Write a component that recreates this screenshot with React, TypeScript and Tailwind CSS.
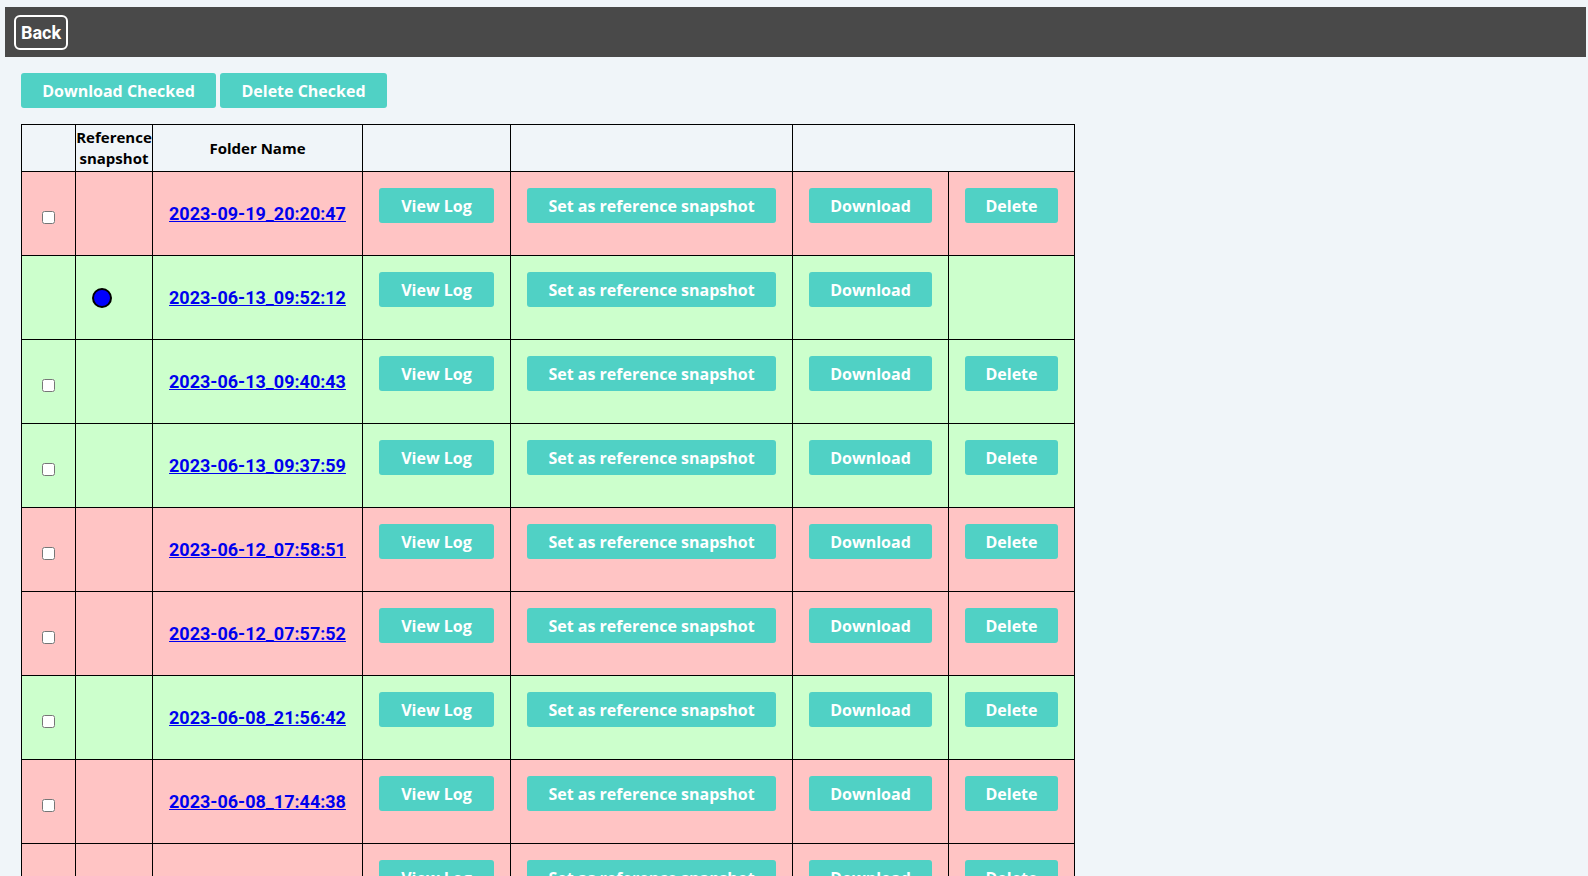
import { useState } from "react";

interface Snapshot {
  name: string;
  ok: boolean;
  isReference: boolean;
}

const snapshots: Snapshot[] = [
  { name: "2023-09-19_20:20:47", ok: false, isReference: false },
  { name: "2023-06-13_09:52:12", ok: true, isReference: true },
  { name: "2023-06-13_09:40:43", ok: true, isReference: false },
  { name: "2023-06-13_09:37:59", ok: true, isReference: false },
  { name: "2023-06-12_07:58:51", ok: false, isReference: false },
  { name: "2023-06-12_07:57:52", ok: false, isReference: false },
  { name: "2023-06-08_21:56:42", ok: true, isReference: false },
  { name: "2023-06-08_17:44:38", ok: false, isReference: false },
  { name: "2023-06-08_09:12:05", ok: false, isReference: false },
];

const btnFont = { fontFamily: "'Open Sans', 'DejaVu Sans', sans-serif" };

function TealButton(props: { label: string; className?: string }) {
  return (
    <button
      style={btnFont}
      className={
        "h-[35px] rounded-[3px] bg-[#50d1c5] text-[16px] font-bold text-white cursor-pointer " +
        (props.className || "")
      }
    >
      {props.label}
    </button>
  );
}

export default function App() {
  const [checked, setChecked] = useState<Record<string, boolean>>({});
  const toggle = (name: string) => setChecked({ ...checked, [name]: !checked[name] });

  return (
    <div
      className="h-screen overflow-y-auto bg-[#f0f5f9] [&::-webkit-scrollbar]:w-[3px] [&::-webkit-scrollbar-thumb]:bg-[#8a8a8a] [&::-webkit-scrollbar-track]:bg-transparent"
      style={{ fontFamily: "Roboto, 'Liberation Sans', sans-serif" }}
    >
      <div className="ml-[5px] mr-[2px] mt-[7px] h-[50px] bg-[#494949] flex items-center pl-[9px]">
        <button className="h-[35px] w-[54px] rounded-[6px] border-2 border-white text-[18px] font-bold text-white">
          Back
        </button>
      </div>

      <div className="pl-[21px] pt-4 pb-[50px]">
        <div className="flex gap-1">
          <TealButton label="Download Checked" className="w-[195px]" />
          <TealButton label="Delete Checked" className="w-[167px]" />
        </div>

        <table className="mt-4 border-collapse table-fixed text-black" style={btnFont}>
          <colgroup>
            <col className="w-[54px]" />
            <col className="w-[77px]" />
            <col className="w-[210px]" />
            <col className="w-[148px]" />
            <col className="w-[282px]" />
            <col className="w-[156px]" />
            <col className="w-[126px]" />
          </colgroup>
          <thead>
            <tr className="h-[47px] text-[15px] font-bold leading-[21px]">
              <th className="border border-black"></th>
              <th className="border border-black px-0 font-bold">Reference snapshot</th>
              <th className="border border-black font-bold">Folder Name</th>
              <th className="border border-black"></th>
              <th className="border border-black"></th>
              <th className="border border-black" colSpan={2}></th>
            </tr>
          </thead>
          <tbody>
            {snapshots.map((s) => (
              <tr key={s.name} className={s.ok ? "bg-[#ccffcc]" : "bg-[#ffc4c4]"}>
                <td className="border border-black p-4 text-center align-middle">
                  {!s.isReference && (
                    <input
                      type="checkbox"
                      checked={!!checked[s.name]}
                      onChange={() => toggle(s.name)}
                      className="mt-[14px] h-[13px] w-[13px] accent-gray-500"
                    />
                  )}
                </td>
                <td className="border border-black p-4 align-middle">
                  {s.isReference && (
                    <div className="h-5 w-5 rounded-full border-2 border-black bg-[#0000ff]" />
                  )}
                </td>
                <td className="border border-black px-1 py-4 text-center align-middle whitespace-nowrap">
                  <a
                    href="#"
                    className="text-[18px] font-bold text-[#0000ee] underline"
                    style={{ fontFamily: "Roboto, 'Liberation Sans', sans-serif" }}
                  >
                    {s.name}
                  </a>
                </td>
                <td className="border border-black p-4 align-top">
                  <TealButton label="View Log" className="block w-[115px] mb-[16px]" />
                </td>
                <td className="border border-black p-4 align-top">
                  <TealButton label="Set as reference snapshot" className="block w-[249px] mb-[16px]" />
                </td>
                <td className="border border-black p-4 align-top">
                  <TealButton label="Download" className="block w-[123px] mb-[16px]" />
                </td>
                <td className="border border-black p-4 align-top">
                  {!s.isReference && <TealButton label="Delete" className="block w-[93px] mb-[16px]" />}
                </td>
              </tr>
            ))}
          </tbody>
        </table>
      </div>
    </div>
  );
}
